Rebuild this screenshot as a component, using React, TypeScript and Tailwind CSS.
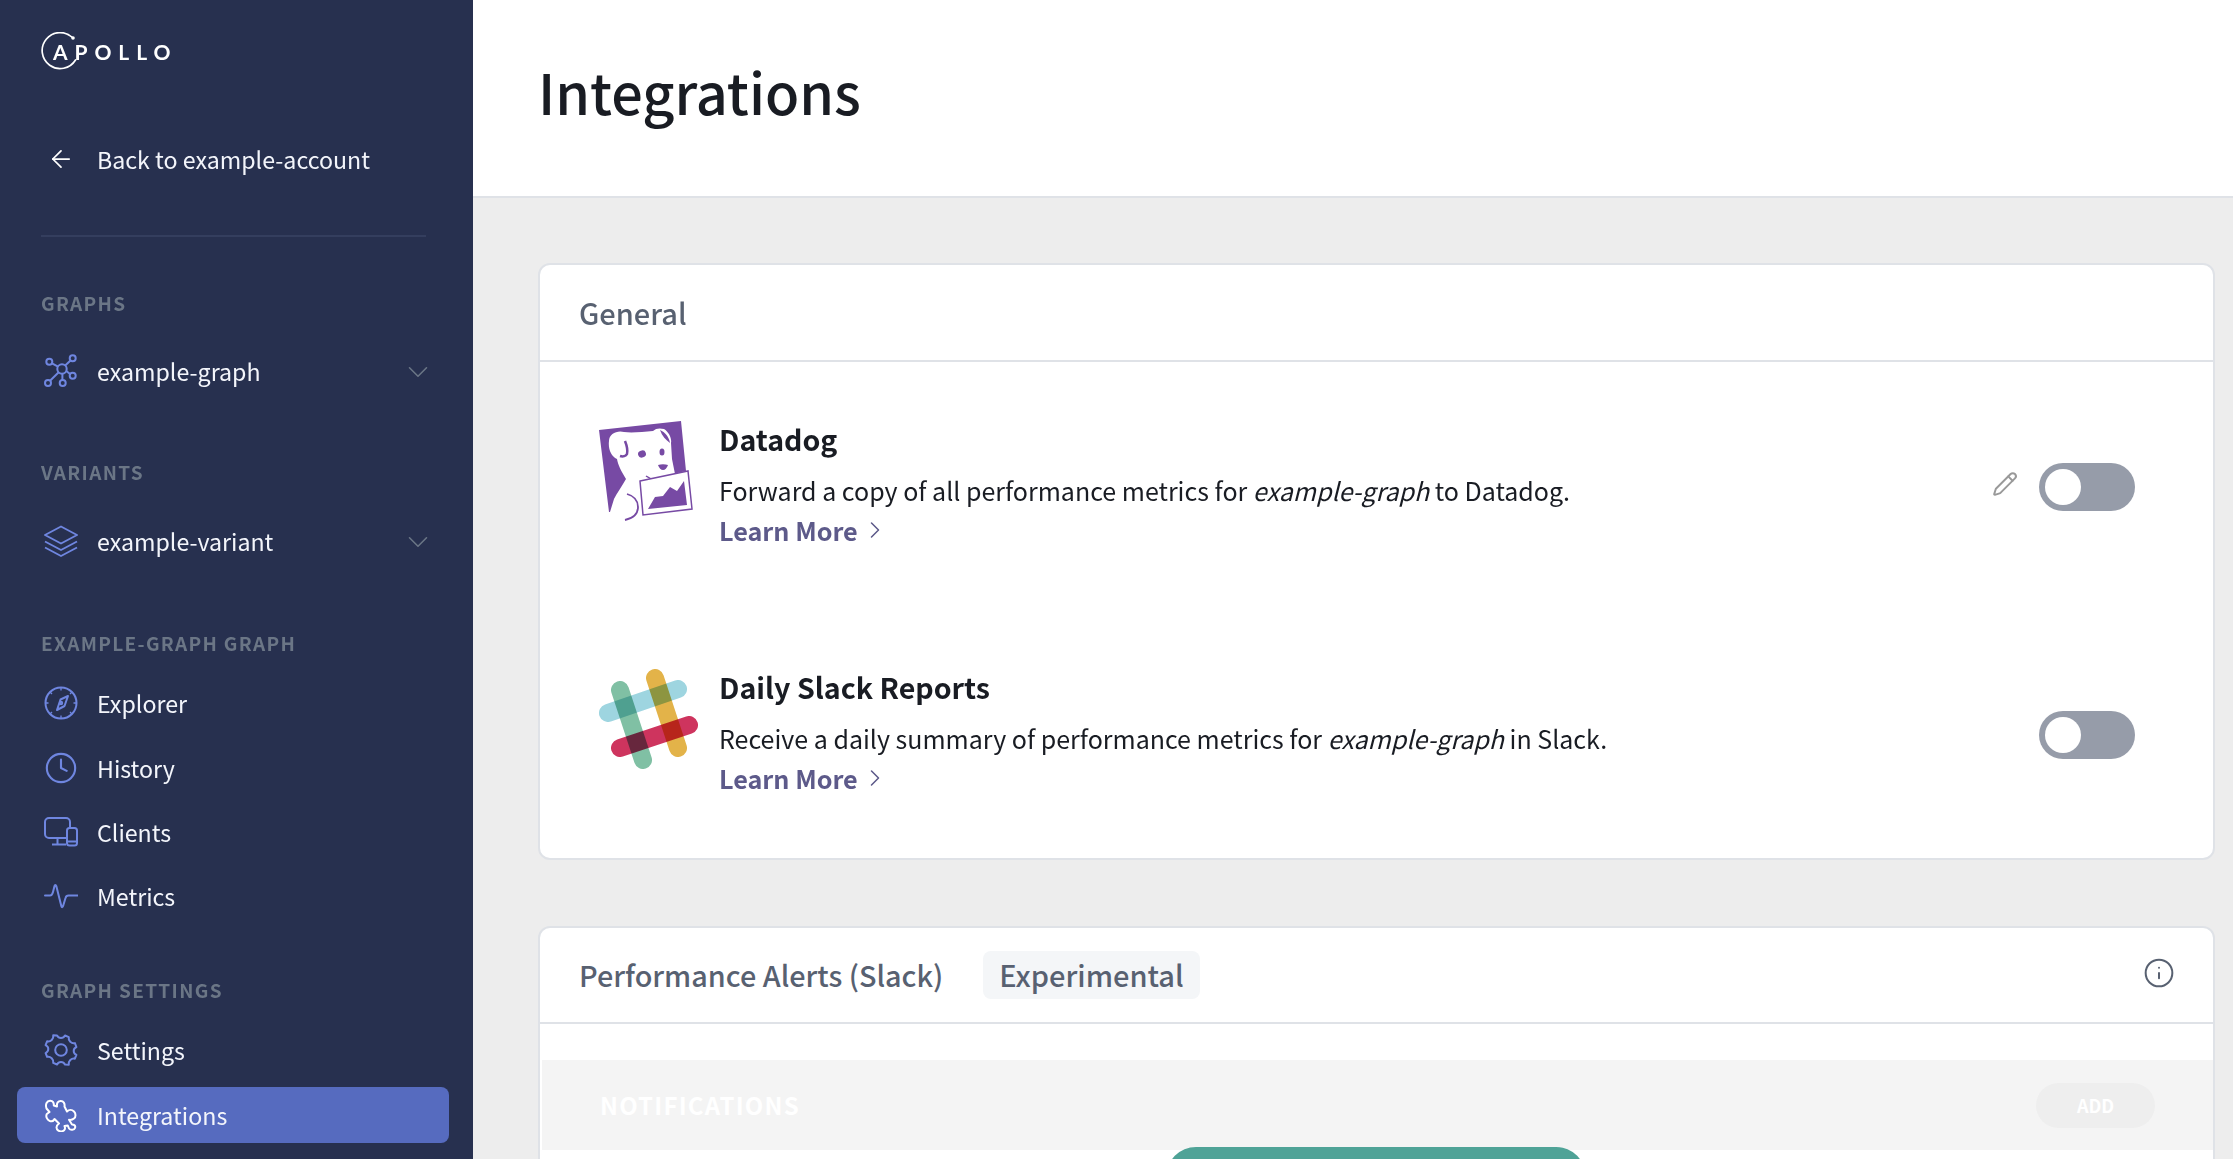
import React from 'react';
import { ArrowLeft, ChevronDown, ChevronRight, Clock, Info, Pencil } from 'lucide-react';

const font = { fontFamily: '"Noto Sans CJK SC", "Noto Sans", sans-serif' };

const ApolloLogo = () => (
  <div className="flex items-center h-[38px] relative">
    <svg width="38" height="38" viewBox="0 0 38 38" fill="none" className="absolute left-0 top-0">
      <path d="M31.500 5.500A18 18 0 1 0 34.500 28" stroke="#fff" strokeWidth="1.700" strokeLinecap="round" />
      <circle cx="32" cy="6" r="1.800" fill="#fff" />
    </svg>
    <span className="ml-[12px] text-white text-[21px] font-bold leading-none tracking-[0.33em]" style={{ fontFamily: 'Lato, sans-serif' }}>
      APOLLO
    </span>
  </div>
);

const GraphIcon = () => (
  <svg width="34" height="34" viewBox="0 0 34 34" fill="none" stroke="#6f86e0" strokeWidth="2">
    <circle cx="18" cy="15" r="4.700" />
    <circle cx="5.300" cy="7.700" r="3" />
    <circle cx="28.700" cy="4.300" r="3" />
    <circle cx="28.700" cy="21.700" r="3" />
    <circle cx="4" cy="29" r="3" />
    <circle cx="18.700" cy="29" r="3" />
    <path d="M8 9.300l6 3.400M26.500 6.500l-5.300 5M22.300 17l3.700 3M6 26.800l8.700-8.500M18.400 19.700V26" />
  </svg>
);

const LayersIcon = () => (
  <svg width="34" height="32" viewBox="0 0 34 32" fill="none" stroke="#6f86e0" strokeWidth="1.900" strokeLinejoin="round">
    <path d="M17 1.500L33 10 17 18.500 1 10z" />
    <path d="M1 16.500l16 8.500 16-8.500M1 22.500L17 31l16-8.500" />
  </svg>
);

const CompassIcon = () => (
  <svg width="34" height="34" viewBox="0 0 34 34" fill="none" stroke="#6f86e0" strokeWidth="2" strokeLinejoin="round">
    <circle cx="17" cy="17" r="15.500" />
    <path d="M24 10l-3.500 10-7.500 4 3.500-10.500z" />
    <circle cx="17" cy="17" r="1.200" />
    <path d="M17 1.500v3M17 29.500v3M1.500 17h3M29.500 17h3M6 6l2 2M26 26l2 2M28 6l-2 2M6 28l2-2" strokeWidth="1.300" />
  </svg>
);

const ClientsIcon = () => (
  <svg width="34" height="30" viewBox="0 0 34 30" fill="none" stroke="#6f86e0" strokeWidth="2" strokeLinejoin="round">
    <path d="M22 21H5a4 4 0 0 1-4-4V5a4 4 0 0 1 4-4h17a4 4 0 0 1 4 4v6" />
    <path d="M13.500 21v6.500M8 27.500h14" />
    <rect x="23" y="11" width="10" height="17.500" rx="2.500" />
    <path d="M23 24.500h10" />
  </svg>
);

const MetricsIcon = () => (
  <svg width="34" height="26" viewBox="0 0 34 26" fill="none" stroke="#6f86e0" strokeWidth="2" strokeLinecap="round" strokeLinejoin="round">
    <path d="M1 12.500h5c2 0 2.500-1.500 3-3.500l1.500-6c.4-1.500 1.300-1.500 1.800 0l5 20c.4 1.500 1.300 1.500 1.800 0l2.400-8c.5-2 1.500-2.500 3-2.500h9" />
  </svg>
);

const GearIcon = () => (
  <svg width="34" height="34" viewBox="0 0 34 34" fill="none" stroke="#6f86e0" strokeWidth="2" strokeLinejoin="round">
    <circle cx="17" cy="17" r="5.800" />
    <path d="M13 2.500c1 2 2 2.500 4 2.500s3-.5 4-2.500l3.800 1.600c-.5 2.200 0 3.200 1.500 4.700 1.500 1.400 2.500 2 4.600 1.300l1.500 3.900c-2 1-2.700 2-2.700 3.900s.7 3 2.700 4l-1.500 3.800c-2.100-.7-3.100-.1-4.600 1.300-1.500 1.500-2 2.500-1.500 4.700L21 31.500c-1-2-2-2.500-4-2.500s-3 .5-4 2.500l-3.800-1.600c.5-2.200 0-3.200-1.500-4.700-1.500-1.400-2.500-2-4.600-1.300L1.600 20.100c2-1 2.700-2.100 2.700-4s-.7-2.900-2.700-3.900l1.500-3.900c2.100.7 3.100.1 4.600-1.300 1.500-1.500 2-2.500 1.500-4.700z" />
  </svg>
);

const PuzzleIcon = () => (
  <svg width="34" height="34" viewBox="0 0 34 34" fill="none" stroke="#fff" strokeWidth="2" strokeLinejoin="round">
    <path d="M2.500 10.500C1 6 3 3 6 2.800c3-.2 4 2.200 3.800 4.700l3.200 1c-.5-3.500 1-5.500 3.800-5.500 2.700 0 4.200 2.500 3.700 5.500l2.500 5c2-2 5-2 7 0s2 5.500 0 7c-1.500 1.300-3.500 1.500-5 1.300l3 4.700c2.500 0 3.800 1.500 3 3.500-.7 2-4.500 2.500-6 .5l-1.200-3-3.300.5c1 2 .5 4.500-2 5.200-3 .8-6-1.200-6-3.700 0-1.500 1-3 2.500-4l-4.500-4.500c-1 2-3 2.800-5 1.800-2.500-1.300-4-4.300-2.700-6.800l2.700-2z" />
  </svg>
);

const DatadogLogo = () => (
  <svg width="96" height="102" viewBox="0 0 96 102" className="shrink-0">
    <path d="M1 11L83 2l5 50-43 10 3 31H11z" fill="#774aa4" />
    <path d="M11 22c0-7 8-11 15-9 7 1 19 0 29-1 3-3 7-3 11-2 5 3 8 10 7 14l1 16 3 15-32 7-1 34-14 5c-6-1-12-3-18-8l4-13c3-6 8-13 12-20-5-8-8-14-9-20-6-3-9-10-8-18z" fill="#fff" />
    <path d="M27 22c2 5 3 9 2 13-1 2-4 3-7 2" stroke="#774aa4" strokeWidth="2.500" fill="none" />
    <path d="M62 11c5 2 9 7 10 13-4-3-8-7-10-13z" fill="#774aa4" />
    <ellipse cx="44" cy="35" rx="4" ry="3.500" fill="#774aa4" transform="rotate(-20 44 35)" />
    <ellipse cx="64" cy="33" rx="2.500" ry="3.500" fill="#774aa4" />
    <path d="M60 46c3-1 7-1 10 0-1 3-3 5-5 5s-4-2-5-5z" fill="#774aa4" />
    <path d="M48 57c4 3 9 4 13 2" stroke="#774aa4" strokeWidth="1.500" fill="none" />
    <path d="M29 75c7 2 11 7 11 13 0 6-4 11-13 13" stroke="#774aa4" strokeWidth="1.800" fill="none" />
    <path d="M42 62l48-10 4 38-49 6z" fill="#fff" stroke="#774aa4" strokeWidth="1.500" />
    <path d="M50 90l7-12 8-1 7-9 7 4 7-10 3 24z" fill="#774aa4" />
  </svg>
);

const SlackLogo = () => (
  <svg width="100" height="100" viewBox="0 0 100 100" className="shrink-0 mt-[2px]">
    <g strokeWidth="18" strokeLinecap="round" fill="none">
      <path d="M10 44L80 20" stroke="#9ed5e0" style={{ mixBlendMode: 'multiply' }} />
      <path d="M22 21L45 91" stroke="#80c0a4" style={{ mixBlendMode: 'multiply' }} />
      <path d="M57 9L80 79" stroke="#e3b349" style={{ mixBlendMode: 'multiply' }} />
      <path d="M22 79L91 56" stroke="#ce345e" style={{ mixBlendMode: 'multiply' }} />
    </g>
  </svg>
);

const SectionLabel = ({ children, className }: { children: React.ReactNode; className: string }) => (
  <div className={`text-[19px] leading-[24px] font-semibold tracking-[0.07em] text-[#6b7686] ${className}`}>{children}</div>
);

const NavItem = ({ icon, label, chevron, className = '' }: { icon: React.ReactNode; label: string; chevron?: boolean; className?: string }) => (
  <div className={`flex items-center h-[40px] ${className}`}>
    <div className="w-[34px] ml-[3px] flex justify-center shrink-0">{icon}</div>
    <span className="ml-[19px] text-[23.200px] leading-[40px] text-[#f3f5fb]">{label}</span>
    {chevron && <ChevronDown className="ml-auto text-[#6b7686] shrink-0 mr-[-3px] mt-[2px]" size={34} strokeWidth={1.100} />}
  </div>
);

const Toggle = () => (
  <div className="w-[96px] h-[48px] rounded-full bg-[#969ca9] flex items-center pl-[6px] shrink-0">
    <div className="w-[36px] h-[36px] rounded-full bg-white" />
  </div>
);

const Integration = ({ logo, title, before, after, className = '', children }: { logo: React.ReactNode; title: string; before: string; after: string; className?: string; children?: React.ReactNode }) => (
  <div className={`flex items-start ${className}`}>
    <div className="w-[121px] ml-[58px] shrink-0">{logo}</div>
    <div className="flex-1">
      <div className="text-[28.600px] leading-[40px] font-semibold text-[#191c23]">{title}</div>
      <div className="mt-[11px] text-[25px] leading-[40px] text-[#191c23]">
        {before}
        <em className="italic">example-graph</em>
        {after}
      </div>
      <div className="flex items-center text-[25.200px] leading-[40px] font-semibold text-[#5d5a8a]">
        Learn More
        <ChevronRight className="ml-[3px]" size={28} strokeWidth={1.300} />
      </div>
    </div>
    {children}
  </div>
);

const App: React.FC = () => {
  return (
    <div className="flex h-screen overflow-hidden bg-[#ededed]" style={font}>
      <aside className="w-[473px] shrink-0 bg-[#27304f] flex flex-col px-[41px] pt-[32px]">
        <ApolloLogo />
        <div className="flex items-center h-[40px] mt-[69px]">
          <div className="w-[34px] ml-[3px] flex justify-center"><ArrowLeft className="text-white" size={28} strokeWidth={1.500} /></div>
          <span className="ml-[19px] text-[23.200px] leading-[40px] text-[#f3f5fb]">Back to example-account</span>
        </div>
        <div className="h-[2px] bg-[#343e5e] mt-[56px] mr-[6px] shrink-0" />
        <SectionLabel className="mt-[54px]">GRAPHS</SectionLabel>
        <NavItem className="mt-[36px]" icon={<GraphIcon />} label="example-graph" chevron />
        <SectionLabel className="mt-[69px]">VARIANTS</SectionLabel>
        <NavItem className="mt-[37px]" icon={<LayersIcon />} label="example-variant" chevron />
        <SectionLabel className="mt-[70px]">EXAMPLE-GRAPH GRAPH</SectionLabel>
        <NavItem className="mt-[28px]" icon={<CompassIcon />} label="Explorer" />
        <NavItem className="mt-[25px]" icon={<Clock className="text-[#6f86e0]" size={34} strokeWidth={1.500} />} label="History" />
        <NavItem className="mt-[24px]" icon={<ClientsIcon />} label="Clients" />
        <NavItem className="mt-[24px]" icon={<MetricsIcon />} label="Metrics" />
        <SectionLabel className="mt-[62px]">GRAPH SETTINGS</SectionLabel>
        <NavItem className="mt-[28px]" icon={<GearIcon />} label="Settings" />
        <div className="flex items-center h-[56px] mt-[17px] -ml-[24px] -mr-[17px] pl-[24px] rounded-[8px] bg-[#566bbf]">
          <div className="w-[34px] ml-[3px] flex justify-center"><PuzzleIcon /></div>
          <span className="ml-[19px] text-[23.200px] leading-[40px] text-[#f3f5fb]">Integrations</span>
        </div>
      </aside>
      <main className="flex-1 min-w-0 flex flex-col">
        <header className="h-[198px] shrink-0 bg-white border-b-2 border-[#dfe2e7] pl-[65px] pt-[53px]">
          <h1 className="text-[55.800px] leading-[76px] font-medium text-[#191c23]">Integrations</h1>
        </header>
        <div className="pl-[65px] pr-[18px] pt-[65px] flex flex-col gap-[66px]">
          <section className="h-[597px] shrink-0 bg-white rounded-[12px] border-2 border-[#dfe2e7]">
            <div className="h-[97px] border-b-2 border-[#dfe2e7] flex items-center pl-[39px] text-[29px] font-medium text-[#586171]">General</div>
            <Integration className="mt-[57px]" logo={<DatadogLogo />} title="Datadog" before="Forward a copy of all performance metrics for " after=" to Datadog.">
              <Pencil className="text-[#999999] mt-[52px] mr-[21px]" size={26} strokeWidth={1.800} />
              <div className="mt-[44px] mr-[78px]"><Toggle /></div>
            </Integration>
            <Integration className="mt-[117px]" logo={<SlackLogo />} title="Daily Slack Reports" before="Receive a daily summary of performance metrics for " after=" in Slack.">
              <div className="mt-[44px] mr-[78px]"><Toggle /></div>
            </Integration>
          </section>
          <section className="relative shrink-0 h-[400px] bg-white rounded-[12px] border-2 border-[#dfe2e7]">
            <div className="h-[96px] border-b-2 border-[#dfe2e7] flex items-center pl-[39px] pr-[38px]">
              <span className="text-[28.800px] font-medium text-[#586171]">Performance Alerts (Slack)</span>
              <span className="ml-[40px] px-[16px] h-[48px] flex items-center rounded-[8px] bg-[#f4f6f8] text-[29px] font-medium text-[#586171]">Experimental</span>
              <Info className="ml-auto text-[#586171] -mt-[4px]" size={32} strokeWidth={1.500} />
            </div>
            <div className="mt-[36px] ml-[2px] h-[90px] bg-[#f4f4f4] flex items-center pl-[58px] pr-[58px]">
              <span className="text-[24px] font-semibold tracking-[0.05em] text-white">NOTIFICATIONS</span>
              <span className="ml-auto w-[119px] h-[45px] flex items-center justify-center rounded-full bg-[#eeeeee] text-[18px] font-semibold text-white">ADD</span>
            </div>
            <div className="absolute left-[626px] top-[219px] w-[420px] h-[60px] rounded-[30px] bg-[#4fa397]" />
          </section>
        </div>
      </main>
    </div>
  );
};

export default App;
